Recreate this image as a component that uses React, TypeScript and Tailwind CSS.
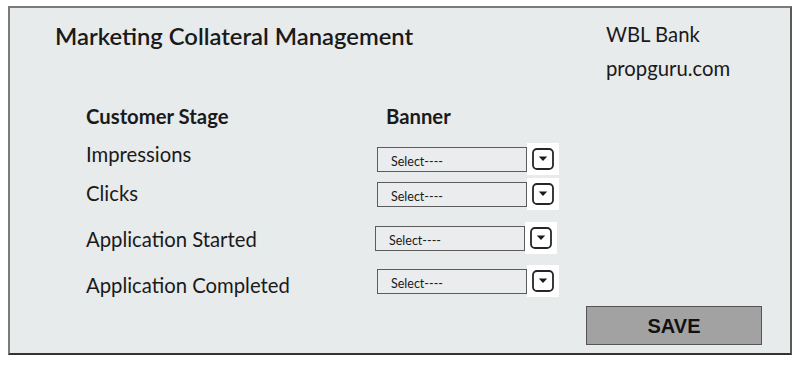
import React from 'react';

const stages = [
  { label: 'Impressions', labelGap: 'mt-[14px]', selectGap: 'mt-[15px]', shift: 'ml-[2px]' },
  { label: 'Clicks', labelGap: 'mt-[15px]', selectGap: 'mt-[3px]', shift: 'ml-[2px]' },
  { label: 'Application Started', labelGap: 'mt-[22px]', selectGap: 'mt-[12px]', shift: 'ml-0' },
  { label: 'Application Completed', labelGap: 'mt-[22px]', selectGap: 'mt-[11px]', shift: 'ml-[2px]' },
];

const DropdownIcon = () => (
  <svg width="22" height="22" viewBox="0 0 22 22">
    <rect x="1" y="1" width="20" height="20" rx="4" fill="white" stroke="#262626" strokeWidth="1.8" />
    <path d="M6.8 8.6 L15.2 8.6 L11 13 Z" fill="#1a1a1a" />
  </svg>
);

const BannerSelect = ({ className }: { className: string }) => (
  <div className={`flex items-center ${className}`}>
    <div className="w-[150px] h-[25px] border border-[#5c5c5c] bg-[#eaeced] pl-[13px] pt-[6px] text-[12.5px] leading-[16px] text-[#1a1a1a]">
      Select----
    </div>
    <div className="w-[32px] h-[32px] bg-white flex items-center justify-center">
      <DropdownIcon />
    </div>
  </div>
);

const App = () => {
  return (
    <div
      className="w-[801px] h-[366px] bg-white pt-[6px] pl-[8px]"
      style={{ fontFamily: 'Lato, "Noto Sans", sans-serif' }}
    >
      <div className="box-border w-[784px] h-[349px] border-2 border-[#7a7a7a] border-r-[#5a5a5a] border-b-[#333333] bg-[#e8ebec] text-[#1a1a1a]">
        <div className="grid grid-cols-[596px_1fr]">
          <h1 className="pl-[45px] mt-[14px] text-[23.8px] leading-[28px] font-semibold">
            Marketing Collateral Management
          </h1>
          <div className="mt-[9px] text-[20.3px] leading-[34px]">
            <div>WBL Bank</div>
            <div>propguru.com</div>
          </div>
        </div>

        <div className="grid grid-cols-[365px_1fr] mt-[19px]">
          <div className="pl-[76px] flex flex-col text-[20.3px] leading-[24px]">
            <div className="font-bold">Customer Stage</div>
            {stages.map((s) => (
              <div key={s.label} className={s.labelGap}>
                {s.label}
              </div>
            ))}
          </div>
          <div className="flex flex-col">
            <div className="pl-[11px] text-[20.3px] leading-[24px] font-bold">Banner</div>
            {stages.map((s) => (
              <BannerSelect key={s.label} className={`${s.selectGap} ${s.shift}`} />
            ))}
          </div>
        </div>

        <div className="flex justify-end pr-[28px] mt-[9px]">
          <button
            className="w-[176px] h-[39px] border border-[#555555] bg-[#a2a2a2] text-[20px] font-bold text-[#111111]"
            style={{ fontFamily: '"Liberation Sans", Arial, sans-serif' }}
          >
            SAVE
          </button>
        </div>
      </div>
    </div>
  );
};

export default App;
